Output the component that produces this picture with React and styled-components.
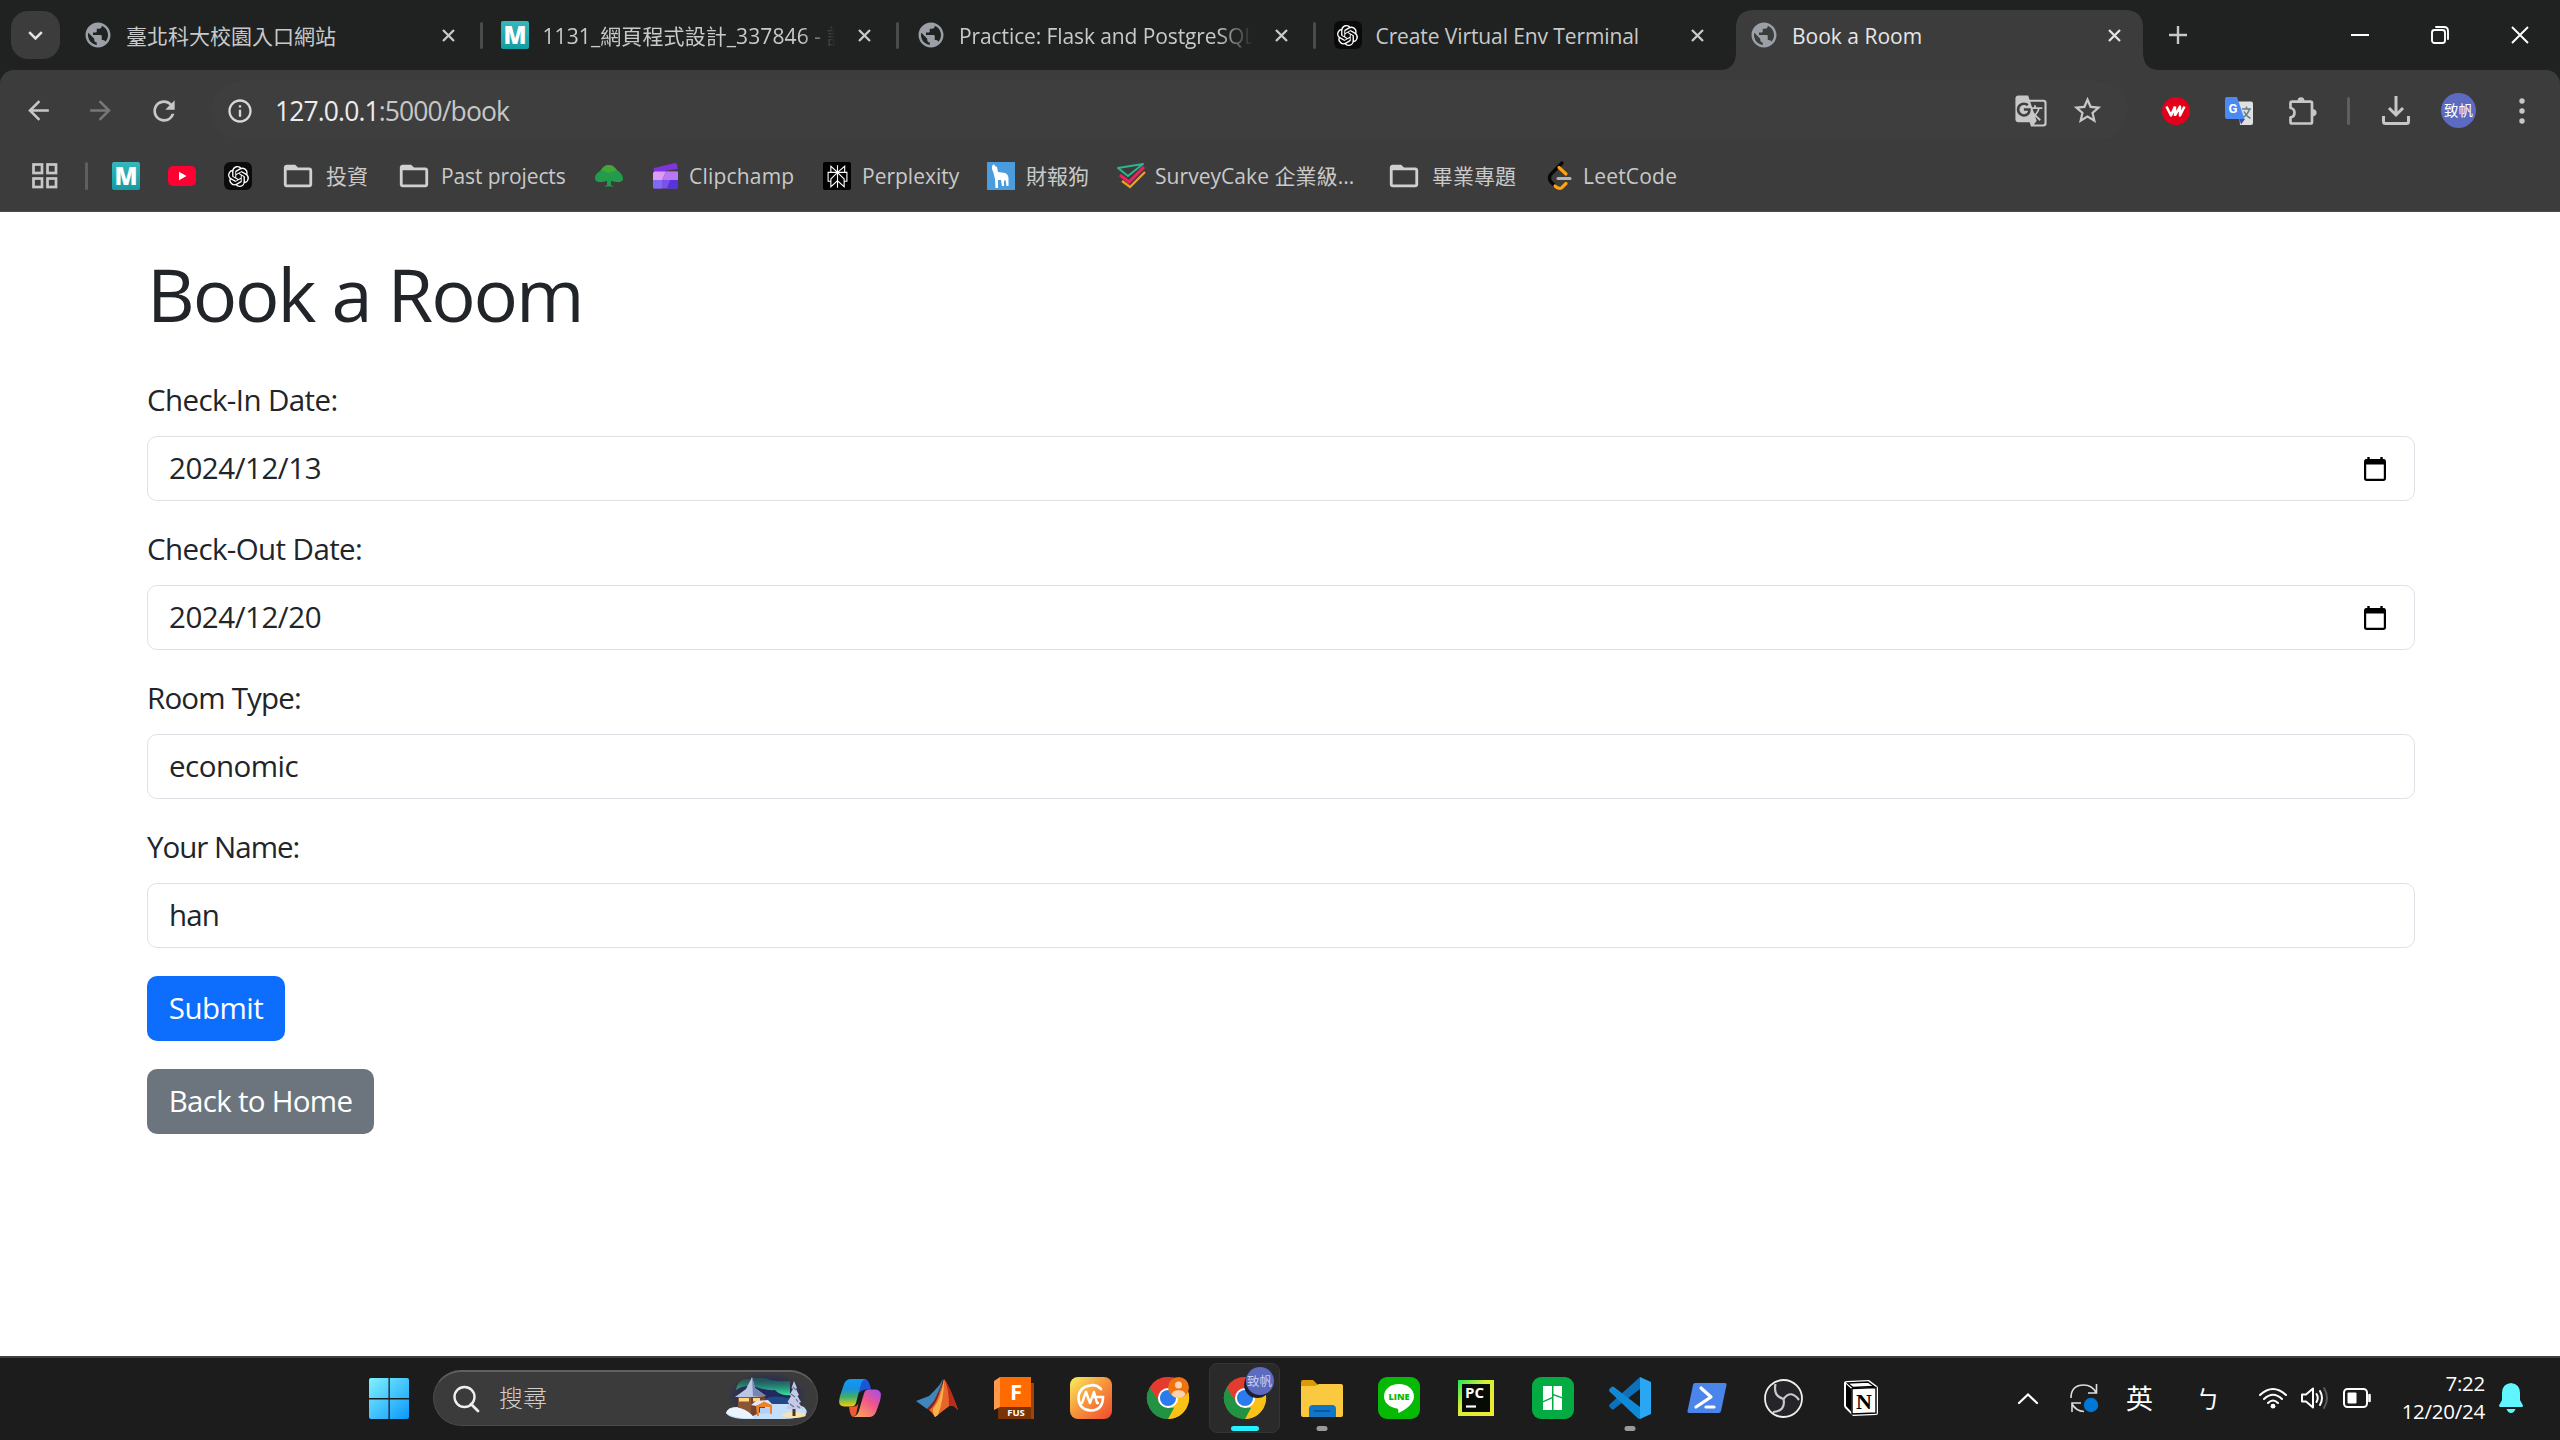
import React from "react";
import styled, { createGlobalStyle, css } from "styled-components";
import {
  MdPublic,
  MdArrowBack,
  MdArrowForward,
  MdRefresh,
  MdInfoOutline,
  MdGTranslate,
  MdStarBorder,
  MdFolderOpen,
} from "react-icons/md";
import { SiOpenai, SiPerplexity } from "react-icons/si";

const font = `"Open Sans", "Noto Sans CJK TC", sans-serif`;

const GlobalStyle = createGlobalStyle`
  * { box-sizing: border-box; }
  body { margin: 0; background: #fff; overflow: hidden; font-family: ${font}; }
  svg { display: block; flex: none; overflow: visible; }
`;

const Screen = styled.div`
  width: 2560px;
  height: 1440px;
  display: flex;
  flex-direction: column;
`;

/* ---------- tab strip ---------- */

const TabStrip = styled.div`
  height: 70px;
  background: #1f2221;
  display: flex;
  align-items: center;
  flex: none;
`;

const TabSearch = styled.div`
  width: 49px;
  height: 48px;
  margin: 0 5px 0 11px;
  border-radius: 17px;
  background: #3c3c3c;
  display: flex;
  align-items: center;
  justify-content: center;
  flex: none;
`;

const Tab = styled.div`
  position: relative;
  width: 416.5px;
  height: 70px;
  flex: none;
  display: flex;
  align-items: center;
  padding: 0 26px 0 18px;
  color: ${(p) => (p.$active ? "#e6e6e6" : "#c9c9c9")};
  ${(p) =>
    p.$divider &&
    css`
      &::after {
        content: "";
        position: absolute;
        right: -1px;
        top: 22px;
        width: 3px;
        height: 27px;
        border-radius: 2px;
        background: #4a4c4b;
      }
    `}
`;

const ActiveShape = styled.svg`
  position: absolute;
  left: -12px;
  top: 10px;
`;

const TabIcon = styled.div`
  width: 30px;
  height: 30px;
  margin-right: 13px;
  display: flex;
  align-items: center;
  justify-content: center;
  position: relative;
`;

const TabTitle = styled.div`
  position: relative;
  flex: 1;
  margin-right: 22px;
  padding-top: 2px;
  overflow: hidden;
  white-space: nowrap;
  font-size: 21px;
  line-height: 34px;
  letter-spacing: ${(p) => p.$ls || 0}px;
  ${(p) =>
    p.$fade &&
    css`
      mask-image: linear-gradient(to right, #000 88%, transparent 100%);
    `}
`;

const TabClose = styled.div`
  position: relative;
  width: 14px;
  display: flex;
`;

const NewTab = styled.div`
  width: 60px;
  display: flex;
  justify-content: center;
`;

const WindowButtons = styled.div`
  margin-left: auto;
  display: flex;
`;

const WindowButton = styled.div`
  width: 80px;
  display: flex;
  align-items: center;
  justify-content: center;
`;

/* ---------- toolbar ---------- */

const ToolbarWrap = styled.div`
  height: 142px;
  flex: none;
  background: #1f2221;
`;

const Toolbar = styled.div`
  height: 142px;
  background: #3c3c3c;
  border-radius: 14px 14px 0 0;
  border-bottom: 1px solid #4b4b4b;
`;

const NavRow = styled.div`
  height: 81px;
  display: flex;
  align-items: center;
  padding: 0 6px 0 7px;
`;

const Slot = styled.div`
  width: ${(p) => p.$w}px;
  display: flex;
  align-items: center;
  justify-content: center;
  color: ${(p) => p.$color || "#c7c7c7"};
  flex: none;
`;

const Omnibox = styled.div`
  width: 1917px;
  height: 59px;
  margin-left: 15px;
  border-radius: 30px;
  background: #3e3e3e;
  display: flex;
  align-items: center;
  padding: 0 13px 0 5px;
  flex: none;
`;

const Url = styled.div`
  flex: 1;
  margin-left: 11px;
  font-size: 26.5px;
  line-height: 40px;
  letter-spacing: -0.9px;
  color: #c7c7c7;
  span {
    color: #ececec;
  }
`;

const VBar = styled.div`
  width: 3px;
  height: 28px;
  border-radius: 2px;
  background: #5f5f5f;
`;

const Avatar = styled.div`
  width: 35px;
  height: 35px;
  border-radius: 50%;
  background: #5c6bc0;
  color: #fff;
  font-family: "Noto Sans CJK TC", sans-serif;
  font-size: 14.5px;
  line-height: 34px;
  text-align: center;
  white-space: nowrap;
`;

const BookmarkRow = styled.div`
  height: 50px;
  display: flex;
  align-items: center;
`;

const Bookmark = styled.div`
  width: ${(p) => p.$w}px;
  flex: none;
  display: flex;
  align-items: center;
  gap: ${(p) => p.$gap || 10}px;
  color: #c9c9c9;
  font-size: 21px;
  line-height: 34px;
  white-space: nowrap;
  letter-spacing: ${(p) => p.$ls || 0}px;
`;

const BookmarkIcon = styled.div`
  width: 28px;
  height: 28px;
  display: flex;
  align-items: center;
  justify-content: center;
  flex: none;
`;

const BlackTile = styled.div`
  width: 28px;
  height: 28px;
  border-radius: ${(p) => p.$r}px;
  background: ${(p) => p.$bg || "#000"};
  color: #fff;
  display: flex;
  align-items: center;
  justify-content: center;
`;

/* ---------- page ---------- */

const Page = styled.main`
  flex: 1;
  background: #fff;
  color: #212529;
  padding: 40px 145px 0 147px;
`;

const Heading = styled.h1`
  margin: 0 0 43px;
  font-size: 74px;
  line-height: 84px;
  font-weight: 400;
  letter-spacing: -2.1px;
`;

const Field = styled.div`
  margin-bottom: 27px;
`;

const Label = styled.div`
  font-size: 29.5px;
  line-height: 42px;
  margin-bottom: 15px;
  letter-spacing: ${(p) => p.$ls || 0}px;
`;

const Control = styled.div`
  height: 65px;
  border: 1px solid #dee2e6;
  border-radius: 10px;
  padding: 0 28px 0 21px;
  display: flex;
  align-items: center;
  justify-content: space-between;
  font-size: 29.5px;
  line-height: 42px;
  letter-spacing: ${(p) => p.$ls || 0}px;
`;

const ControlText = styled.span`
  padding-bottom: 2px;
`;

const Buttons = styled.div`
  display: flex;
  flex-direction: column;
  align-items: flex-start;
  gap: 28px;
  padding-top: 1px;
`;

const Button = styled.div`
  width: ${(p) => p.$w}px;
  height: 65px;
  border-radius: 10px;
  background: ${(p) => p.$bg};
  color: #fff;
  font-size: 29.5px;
  line-height: 64px;
  text-align: center;
  white-space: nowrap;
  letter-spacing: ${(p) => p.$ls || 0}px;
`;

/* ---------- taskbar ---------- */

const Taskbar = styled.div`
  height: 84px;
  flex: none;
  background: #1c1c1c;
  border-top: 2px solid #404040;
  display: flex;
  align-items: center;
  padding: 0 0 2px 369px;
`;

const SearchBox = styled.div`
  width: 385px;
  height: 56px;
  margin: 0 3px 0 24px;
  border-radius: 28px;
  background: #3b3b3b;
  border: 1px solid #4a4a4a;
  border-top: 2px solid #606060;
  display: flex;
  align-items: center;
  padding: 0 10px 0 19px;
  color: #cfcfcf;
  font-family: "Noto Sans CJK TC", sans-serif;
  font-weight: 300;
  font-size: 24px;
  line-height: 34px;
`;

const SearchText = styled.div`
  flex: 1;
  margin-left: 20px;
  padding-bottom: 3px;
`;

const AppSlot = styled.div`
  position: relative;
  width: 77px;
  height: 70px;
  display: flex;
  align-items: center;
  justify-content: center;
  flex: none;
`;

const ActiveTile = styled.div`
  position: absolute;
  inset: 0 3px;
  border-radius: 8px;
  background: #2a2a2a;
  border: 1px solid #353535;
`;

const Indicator = styled.div`
  position: absolute;
  bottom: 2px;
  left: 50%;
  transform: translateX(-50%);
  width: ${(p) => (p.$wide ? 28 : 11)}px;
  height: 5px;
  border-radius: 3px;
  background: ${(p) => (p.$wide ? "#25f0ff" : "#9a9a9a")};
`;

const AppArt = styled.div`
  position: relative;
`;

const AppBadge = styled.div`
  position: absolute;
  left: 22px;
  top: -10px;
  width: 28px;
  height: 28px;
  border-radius: 50%;
  background: #5c6bc0;
  color: #c9cff0;
  font-family: "Noto Sans CJK TC", sans-serif;
  font-size: 12.5px;
  line-height: 27px;
  text-align: center;
  white-space: nowrap;
`;

const Tray = styled.div`
  margin-left: auto;
  padding-right: 37px;
  display: flex;
  align-items: center;
  color: #fff;
`;

const Ime = styled.div`
  width: ${(p) => p.$w}px;
  font-family: "Noto Sans CJK TC", sans-serif;
  font-size: ${(p) => p.$size}px;
  line-height: 36px;
  flex: none;
`;

const Clock = styled.div`
  width: 114px;
  margin-right: 14px;
  padding-bottom: 2px;
  text-align: right;
  font-size: 20.5px;
  line-height: 28px;
  letter-spacing: -0.25px;
  white-space: nowrap;
`;

/* ---------- drawings ---------- */

const Cross = ({ s = 13, w = 2.3, c = "#d0d0d0" }) => (
  <svg width={s} height={s} viewBox={`0 0 ${s} ${s}`}>
    <path d={`M1 1L${s - 1} ${s - 1}M${s - 1} 1L1 ${s - 1}`} stroke={c} strokeWidth={w} />
  </svg>
);

const Svg = ({ w, h = w, vb, children }) => (
  <svg width={w} height={h} viewBox={vb || `0 0 ${w} ${h}`} fill="none">
    {children}
  </svg>
);

const MLogo = () => (
  <Svg w={28}>
    <defs>
      <linearGradient id="ml" x1="0" y1="0" x2="0" y2="1">
        <stop offset="0" stopColor="#35b7bd" />
        <stop offset="1" stopColor="#129da3" />
      </linearGradient>
    </defs>
    <rect width="28" height="28" rx="2" fill="url(#ml)" />
    <text x="14" y="22.5" textAnchor="middle" fill="#fff" fontFamily="Open Sans" fontWeight="800" fontSize="24" textLength="23" lengthAdjust="spacingAndGlyphs">M</text>
  </Svg>
);

const GptLogo = ({ bg }) => (
  <BlackTile $r={6} $bg={bg || "#0b0b0b"}>
    <SiOpenai size={21} />
  </BlackTile>
);

const YouTube = () => (
  <Svg w={28} h={20}>
    <rect width="28" height="20" rx="5" fill="#ff0033" />
    <path d="M11 5.8L18.5 10L11 14.2Z" fill="#fff" />
  </Svg>
);

const Tree = () => (
  <Svg w={28} h={22}>
    <path d="M14 0C18 0 20 3 22 5C25 7 28 10 28 13.5C28 17 24 17.5 21 17L16 16V20L19 21.6H9L12 20V16L7 17C3 17.5 0 16.5 0 13C0 9 4 7 6 5C8 2 10 0 14 0Z" fill="#239b4c" />
    <path d="M14 0C18 0 20 3 22 5L14 8L6 5C8 2 10 0 14 0Z" fill="#46a537" />
  </Svg>
);

const Clipchamp = () => (
  <Svg w={26} h={26}>
    <path d="M1 5L22 0Q24 0 24.3 3L24.5 6L2 9.5Q0 9 1 5Z" fill="#7f35db" />
    <rect x="0" y="8.5" width="25" height="17" rx="1.5" fill="#7d50ea" />
    <path d="M1.5 8.5H13L9 17H0V10Z" fill="#dc9cf7" />
    <path d="M13 8.5H25V17H9Z" fill="#b877f3" />
    <path d="M0 17H9V25.5H1.5Q0 25.5 0 24Z" fill="#7f6bf3" />
    <path d="M17 17H25V24Q25 25.5 23.500 25.500H14Z" fill="#5533df" />
  </Svg>
);

const HorseDog = () => (
  <Svg w={28}>
    <rect width="28" height="28" fill="#4b9cdc" />
    <path d="M5 4L7 2L8 4L10 5L11 10L18 11Q21 12 21.5 16V24H19.500L18.500 18L17 19V24H15L14 18H11V26H8.500L8 17L6.500 11L5 7Z" fill="#fff" />
  </Svg>
);

const SurveyCake = () => (
  <Svg w={28} h={26}>
    <path d="M1 5L26 1L11 13Z" stroke="#2db68c" strokeWidth="2" strokeLinejoin="round" />
    <path d="M3 12L12 19L27 4" stroke="#e9245f" strokeWidth="3" />
    <path d="M5 18L13 24L28 9" stroke="#f59a1b" strokeWidth="2.400" />
  </Svg>
);

const LeetCode = () => (
  <Svg w={24} h={28}>
    <path d="M14 1L3 12Q0 16 3 20L8 25" stroke="#070707" strokeWidth="3.400" strokeLinecap="round" />
    <path d="M11 5.500L18 12M7 24Q11 28 14 25.500L18 21.500" stroke="#ffa116" strokeWidth="3.200" strokeLinecap="round" />
    <path d="M10 16.500H22" stroke="#b5b5b5" strokeWidth="3" strokeLinecap="round" />
  </Svg>
);

const Grid4 = () => (
  <Svg w={26}>
    {[[1.5, 1.5], [15.5, 1.5], [1.5, 15.5], [15.5, 15.5]].map(([x, y]) => (
      <rect key={`${x}-${y}`} x={x} y={y} width="8.500" height="8.500" stroke="#c7c7c7" strokeWidth="2.700" />
    ))}
  </Svg>
);

const VwBadge = () => (
  <Svg w={28}>
    <circle cx="14" cy="14" r="14" fill="#e2001a" />
    <path d="M4.500 9.500L9 18.500L13 9.500M13 19V9.500M13 18.500L18 9.500V18.500L22.500 9.500" stroke="#fff" strokeWidth="2.500" strokeLinejoin="round" />
  </Svg>
);

const GTranslateColor = () => (
  <Svg w={28}>
    <path d="M13 4.500H26Q28 4.500 28 6.500V26Q28 28 26 28H15Z" fill="#e0e0e0" />
    <path d="M14.500 22H20L16 27.500Z" fill="#3949ab" />
    <path d="M2 0H12L19.500 22H2Q0 22 0 20V2Q0 0 2 0Z" fill="#4a8af4" />
    <text x="3.500" y="15.500" fill="#fff" fontFamily="Roboto" fontWeight="700" fontSize="13">G</text>
    <path d="M17 12H26M21.500 9.500V12M24.500 12Q22.500 18 18.500 20M19 14.500Q21 19 25.500 21.500" stroke="#607d8b" strokeWidth="1.500" />
  </Svg>
);

const Puzzle = () => (
  <Svg w={28} h={28}>
    <path
      d="M1.500 11V6.200Q1.500 4.700 3 4.700H21.500Q23 4.700 23 6.200V25Q23 26.500 21.500 26.500H3Q1.500 26.500 1.500 25V20.400C6.800 19.600 6.800 11.800 1.500 11Z"
      stroke="#c7c7c7"
      strokeWidth="2.700"
      strokeLinejoin="round"
    />
    <path d="M8.500 4.500Q8.500 .3 12 .3Q15.500 .3 15.500 4.500ZM23.500 12Q27.600 12.400 27.600 15.700Q27.600 19 23.500 19.400Z" fill="#c7c7c7" />
    <path d="M0 12.700V18.700" stroke="#3c3c3c" strokeWidth="4" />
  </Svg>
);

const Download = () => (
  <Svg w={28} h={29}>
    <path d="M14 0V18M7 12L14 19L21 12" stroke="#c7c7c7" strokeWidth="3" />
    <path d="M1.500 20V25.500Q1.500 27.500 3.500 27.500H24.500Q26.500 27.500 26.500 25.500V20" stroke="#c7c7c7" strokeWidth="3" />
  </Svg>
);

const Calendar = () => (
  <Svg w={22} h={24}>
    <path d="M4.500 0V4M17.500 0V4" stroke="#000" strokeWidth="2.400" />
    <rect x="1.100" y="3.200" width="19.800" height="19.600" rx="1.600" stroke="#000" strokeWidth="2.200" />
    <rect x="1" y="2.500" width="20" height="5" fill="#000" />
  </Svg>
);

const WinLogo = () => (
  <Svg w={40} h={41}>
    <defs>
      <linearGradient id="wn" x1="0" y1="0" x2="40" y2="41" gradientUnits="userSpaceOnUse">
        <stop offset="0" stopColor="#80f2ff" />
        <stop offset="1" stopColor="#0a97fb" />
      </linearGradient>
    </defs>
    <path d="M2 0H19.500V20H0V2Q0 0 2 0ZM20.800 0H38Q40 0 40 2V20H20.800ZM0 21.500H19.500V41H2Q0 41 0 39ZM20.800 21.500H40V39Q40 41 38 41H20.800Z" fill="url(#wn)" />
  </Svg>
);

const Winter = () => (
  <Svg w={81} h={43}>
    <defs>
      <radialGradient id="nt" cx=".5" cy=".5" r=".5">
        <stop offset=".5" stopColor="#20285e" />
        <stop offset="1" stopColor="#20285e" stopOpacity="0" />
      </radialGradient>
      <linearGradient id="au" x1="0" y1="0" x2="0" y2="1">
        <stop offset="0" stopColor="#1a7f66" stopOpacity=".35" />
        <stop offset="1" stopColor="#35e69a" />
      </linearGradient>
    </defs>
    <ellipse cx="41" cy="19" rx="40" ry="24" fill="url(#nt)" />
    <path d="M10 13Q11 5 18 2H24V9Q15 9 10 13ZM27 1H40Q46 5 64 4V18Q54 19 49 13Q40 14 27 9Z" fill="url(#au)" />
    <path d="M34 24Q46 16 66 22V29H34Z" fill="#1f4a86" />
    <path d="M0 36Q2 29 13 30L30 33L44 27H70L78 30Q82 34 80 37Q72 42 58 42H22Q4 42 0 36Z" fill="#c4dff9" />
    <path d="M12 19L39 19V33L25 40L12 31Z" fill="#74422f" />
    <path d="M12 19L25 19V39L12 31Z" fill="#8c5535" />
    <path d="M13 21H23V24.500H13ZM27 21H34V24.500H27Z" fill="#ffd67c" />
    <path d="M26 0L29 11L40 19L25 20L9 20L20 12Z" fill="#b9c6e4" />
    <path d="M26 0L29 11L40 19L27 19Z" fill="#7685b6" />
    <path d="M25 28L30 24L42 23L47 28L43 29L38 26L30 29Z" fill="#dfe8fa" />
    <path d="M30 29L38 24.500L46 28V37H44V30H33V39H31Z" fill="#ee812c" />
    <path d="M34 31H44V36L34 37Z" fill="#b3cff2" />
    <path d="M0 36Q3 29 14 31Q24 34 28 41Q8 42 0 36Z" fill="#eaf4ff" />
    <ellipse cx="68" cy="38" rx="12" ry="3" fill="#f7e3af" />
    <path d="M68 27V39" stroke="#4e3326" strokeWidth="3" />
    <path d="M68 4L71 11L70 12L73 18L71.500 19L75 25L73 26L77 32H60L63 26L61.500 25L65 19L63.500 18L67 12L65.500 11Z" fill="#c4cbe4" />
    <path d="M67 10L70 13M65 17L69 20M70 22L72 25M64 27L68 30M71 29L74 31" stroke="#6d759f" strokeWidth="1.300" />
  </Svg>
);

const Copilot = () => (
  <Svg w={42} h={38}>
    <defs>
      <linearGradient id="ca" x1="0" y1="0" x2="0" y2="1">
        <stop offset="0" stopColor="#0e9bf5" />
        <stop offset=".35" stopColor="#1a8fe0" />
        <stop offset=".65" stopColor="#3fae6a" />
        <stop offset="1" stopColor="#f8cc0a" />
      </linearGradient>
      <linearGradient id="cb" x1="1" y1="0" x2="0.300" y2="1">
        <stop offset="0" stopColor="#a24df0" />
        <stop offset=".5" stopColor="#f0568c" />
        <stop offset="1" stopColor="#ff9b5c" />
      </linearGradient>
    </defs>
    <path d="M20 0H26Q30 0 32 10.500H27Q22 11 20 14Z" fill="#1b55d8" />
    <path d="M12 0H27Q23 1 22 5L17 24Q16 27.500 12 27.500H5Q-2 27.500 1 17L5 5Q7 0 12 0Z" fill="url(#ca)" />
    <path d="M10 27.500H15Q18 27.500 19.500 24L17 36L14 38Q11 37 10 27.500Z" fill="#ee5a30" />
    <path d="M30 38H14Q18 37 19.500 33L25 14.500Q26 10.500 30 10.500H37Q44 11 41 22L37 33Q35 38 30 38Z" fill="url(#cb)" />
  </Svg>
);

const Matlab = () => (
  <Svg w={42} h={38}>
    <path d="M0 22L13 17L20 10Q24 6 27 0L22 22L11 30Z" fill="#3f86bd" />
    <path d="M11 30L18 22Q24 10 27 0Q20 24 19 38Q15 31 11 30Z" fill="#8c1d14" />
    <path d="M28 0Q33 6 42 31Q36 24 32 28L19 38Q16 33 13 31Q21 26 28 0Z" fill="#e8652a" />
    <path d="M28 0Q28 20 22 36L19 38Q16 33 17 30Q25 20 28 0Z" fill="#f7b24a" />
    <path d="M29 1Q34 8 42 31Q37 25 33 27Q33 12 29 1Z" fill="#b92b1c" />
  </Svg>
);

const Fusion = () => (
  <Svg w={40} h={42}>
    <path d="M4 30H40V42H4Z" fill="#7a3305" />
    <path d="M37 6H40V42H37Z" fill="#a04407" />
    <path d="M6 0H37V30H6Z" fill="#ff6b00" />
    <path d="M0 4L6 0V30L0 33Z" fill="#ff9a4d" />
    <text x="22" y="22.500" textAnchor="middle" fill="#fff" fontFamily="Open Sans" fontWeight="700" fontSize="22">F</text>
    <text x="22" y="38.500" textAnchor="middle" fill="#fff" fontFamily="Open Sans" fontWeight="700" fontSize="9.500">FUS</text>
  </Svg>
);

const PulseApp = () => (
  <Svg w={42}>
    <defs>
      <linearGradient id="gm" x1="0" y1="0" x2="1" y2="1">
        <stop offset="0" stopColor="#f8f060" />
        <stop offset=".45" stopColor="#f79a3c" />
        <stop offset="1" stopColor="#ef4a2e" />
      </linearGradient>
    </defs>
    <rect width="42" height="42" rx="8" fill="url(#gm)" />
    <path d="M31 12Q26 7 20 8.500Q9 10 8.500 21Q9 33 21 33.500Q33 33 33 20H24" stroke="#fff" strokeWidth="2.600" strokeLinecap="round" />
    <path d="M9 26H12L16 15L20 26L24 15L27 26H29" stroke="#fff" strokeWidth="2.400" strokeLinejoin="round" />
  </Svg>
);

const Chrome = ({ children }) => (
  <Svg w={42} vb="0 0 48 48">
    <path d="M24 24L3.200 12A24 24 0 0 1 44.800 12Z" fill="#ea4335" />
    <path d="M24 24L44.800 12A24 24 0 0 1 24 48Z" fill="#fbbc04" />
    <path d="M24 24L24 48A24 24 0 0 1 3.200 12Z" fill="#34a853" />
    <path d="M24 13H45.300A24 24 0 0 1 24 48L33.500 29.500Z" fill="#fbc116" />
    <path d="M3.200 12L14.500 29.500Q18 35 24 35H31L24 48A24 24 0 0 1 3.200 12Z" fill="#229342" />
    <path d="M3.200 12A24 24 0 0 1 45.300 13H24L14.500 29.500Z" fill="#e33b2e" />
    <circle cx="24" cy="24" r="11.500" fill="#fff" />
    <circle cx="24" cy="24" r="9.200" fill="#2a7bee" />
    {children}
  </Svg>
);

const PersonBadge = () => (
  <g>
    <circle cx="36" cy="12" r="12" fill="#ee7310" />
    <circle cx="36" cy="9" r="4" fill="#fbd3b0" />
    <path d="M28 20Q29 15 36 15Q43 15 44 20Q41 24 36 24Q31 24 28 20Z" fill="#fbd3b0" />
  </g>
);

const BadgeShadow = () => <circle cx="38" cy="9" r="15" fill="#1d2030" />;

const Explorer = () => (
  <Svg w={42} h={37}>
    <path d="M0 2Q0 0 2 0H12L17 5V12H0Z" fill="#dc9b06" />
    <path d="M0 6H14L18 4H40Q42 4 42 6V35Q42 37 40 37H2Q0 37 0 35Z" fill="#fbc93f" />
    <path d="M8 37V29Q8 25 12 25H31Q35 25 35 29V37Z" fill="#1175c8" />
    <path d="M13 31H29" stroke="#07518f" strokeWidth="1.500" />
  </Svg>
);

const Line = () => (
  <Svg w={42}>
    <rect width="42" height="42" rx="9" fill="#05b905" />
    <path d="M21 7C12 7 6 12.500 6 19.500C6 26 12 30.500 19 31.500C21 32 20 34 20.500 36C27 33 36 27 36 19.500C36 12.500 30 7 21 7Z" fill="#fff" />
    <text x="21" y="23" textAnchor="middle" fill="#05b905" fontFamily="Open Sans" fontWeight="800" fontSize="9.500" textLength="21" lengthAdjust="spacingAndGlyphs">LINE</text>
  </Svg>
);

const PyCharm = () => (
  <Svg w={36}>
    <defs>
      <linearGradient id="pc" x1="0" y1="0" x2="1" y2="1">
        <stop offset="0" stopColor="#21e65a" />
        <stop offset=".4" stopColor="#d5ee35" />
        <stop offset="1" stopColor="#f2ea30" />
      </linearGradient>
    </defs>
    <rect width="36" height="36" fill="url(#pc)" />
    <rect x="4" y="4" width="28" height="28" fill="#060b06" />
    <text x="7" y="18" fill="#fff" fontFamily="Open Sans" fontWeight="700" fontSize="14" textLength="19" lengthAdjust="spacingAndGlyphs">PC</text>
    <path d="M8 26.500H18" stroke="#fff" strokeWidth="2.200" />
  </Svg>
);

const GreenApp = () => (
  <Svg w={42}>
    <rect width="42" height="42" rx="9" fill="#04ab42" />
    <path d="M11 9H20V20L11 24ZM21.500 9H30V20L21.500 17ZM11 25.500L20 21.500V33H11ZM21.500 18.500L30 21.500V33H21.500Z" fill="#fff" />
  </Svg>
);

const VsCode = () => (
  <Svg w={42}>
    <path d="M31 0L42 5V37L31 42Z" fill="#2aa7f2" />
    <path d="M31 0V12L5 32Q4 33 2.500 32L.5 30Q-.5 29 .5 27.500Z" fill="#0e70b8" />
    <path d="M31 42V30L5 10Q4 9 2.500 10L.5 12Q-.5 13 .5 14.500L29 41.500Z" fill="#1089d6" />
  </Svg>
);

const PowerShell = () => (
  <Svg w={40} h={30}>
    <path d="M8 0H38Q40 0 39.500 2L34 28Q33.500 30 32 30H2Q0 30 .5 28L6 2Q6.500 0 8 0Z" fill="#4b84ea" />
    <path d="M14 5L24 14L9 24M19 24H27" stroke="#fff" strokeWidth="3.200" strokeLinecap="round" strokeLinejoin="round" />
  </Svg>
);

const Obs = () => (
  <Svg w={39}>
    <circle cx="19.500" cy="19.500" r="18.500" fill="#252428" stroke="#efefef" strokeWidth="1.800" />
    <g stroke="#c9c9cb" strokeWidth="2.200">
      <path d="M19.500 20Q9 17 11.500 5" />
      <path d="M19.500 20Q27 10 35 21" />
      <path d="M19.500 20Q22 32 9 33" />
    </g>
  </Svg>
);

const Notion = () => (
  <Svg w={34} h={36}>
    <path d="M3 1L25 0L33 6Q34 7 34 8V33Q34 35 32 35L9 36L1 28Q0 27 0 25V3Q0 1 3 1Z" fill="#fff" />
    <path d="M3.500 3L24 2L30 6.500L9 7.500Z" fill="#fff" stroke="#000" strokeWidth="1.300" />
    <path d="M2 4L7.500 9V32L2 26Z" fill="#000" />
    <path d="M8 8.500L32 7.500V33L8 34Z" fill="#fff" stroke="#000" strokeWidth="1.400" />
    <text x="20" y="28.500" textAnchor="middle" fill="#000" fontFamily="Liberation Serif" fontWeight="700" fontSize="22">N</text>
  </Svg>
);

const Magnifier = () => (
  <Svg w={26}>
    <circle cx="11.500" cy="11" r="10" stroke="#efefef" strokeWidth="2.400" />
    <path d="M18 18L25 25" stroke="#efefef" strokeWidth="2.800" strokeLinecap="round" />
  </Svg>
);

const Sync = () => (
  <Svg w={28}>
    <path d="M1 14Q1 1 14 1Q22 1 26.500 9M26.500 0V9H18M2 28V19H11M2 20Q6 27 14 27.500" stroke="#dedede" strokeWidth="1.600" />
    <circle cx="21" cy="21" r="7.200" fill="#0078d7" />
  </Svg>
);

const Wifi = () => (
  <Svg w={28} h={21}>
    <path d="M1 7Q14 -5 27 7M5 11Q14 2.500 23 11M9 15Q14 10 19 15" stroke="#fff" strokeWidth="2.100" strokeLinecap="round" />
    <circle cx="14" cy="18.200" r="2.400" fill="#fff" />
  </Svg>
);

const Speaker = () => (
  <Svg w={28} h={22}>
    <path d="M1 7.500H5L12 1.500V20.500L5 14.500H1Z" stroke="#fff" strokeWidth="2" strokeLinejoin="round" />
    <path d="M15.500 7Q18 11 15.500 15M19 4Q23 11 19 18" stroke="#fff" strokeWidth="2" strokeLinecap="round" />
    <path d="M23 1Q29 11 23 21" stroke="#5a5a5a" strokeWidth="2" strokeLinecap="round" />
  </Svg>
);

const Battery = () => (
  <Svg w={28} h={20}>
    <rect x="1" y="1" width="23" height="18" rx="3.500" stroke="#fff" strokeWidth="2" />
    <rect x="4.500" y="4.500" width="9" height="11" rx="1" fill="#fff" />
    <path d="M26.500 7V13" stroke="#fff" strokeWidth="2.600" strokeLinecap="round" />
  </Svg>
);

const Bell = () => (
  <Svg w={24} h={30}>
    <path d="M12 0Q21 1 21 10V17L24 22.500Q24 24 22.500 24H1.500Q0 24 0 22.500L3 17V10Q3 1 12 0Z" fill="#60f5ff" />
    <path d="M7.500 26H16.500Q15 30 12 30Q9 30 7.500 26Z" fill="#60f5ff" />
  </Svg>
);

const Globe = () => <MdPublic size={30} color="#9aa0a6" />;

const tabs = [
  { title: "臺北科大校園入口網站", icon: <Globe />, divider: true },
  { title: "1131_網頁程式設計_337846 - 課", icon: <MLogo />, divider: true, fade: true, ls: 0.1 },
  { title: "Practice: Flask and PostgreSQL", icon: <Globe />, divider: true, fade: true, ls: -0.1 },
  { title: "Create Virtual Env Terminal", icon: <GptLogo bg="#0a0a0a" />, ls: -0.1 },
  { title: "Book a Room", icon: <Globe />, active: true, ls: 0 },
];

const Folder = () => <MdFolderOpen size={34} color="#d0d0d0" />;

const bookmarks = [
  { w: 56, icon: <MLogo /> },
  { w: 56, icon: <YouTube /> },
  { w: 60, icon: <GptLogo /> },
  { w: 116, icon: <Folder />, text: "投資", gap: 14 },
  { w: 195, icon: <Folder />, text: "Past projects", gap: 13, ls: -0.1 },
  { w: 57, icon: <Tree /> },
  { w: 171, icon: <Clipchamp />, text: "Clipchamp", gap: 9, ls: 0.2 },
  { w: 164, icon: <BlackTile $r={2}><SiPerplexity size={23} /></BlackTile>, text: "Perplexity", gap: 11 },
  { w: 130, icon: <HorseDog />, text: "財報狗", gap: 11 },
  { w: 273, icon: <SurveyCake />, text: "SurveyCake 企業級...", gap: 10, ls: 0.05 },
  { w: 156, icon: <Folder />, text: "畢業專題", gap: 14 },
  { w: 140, icon: <LeetCode />, text: "LeetCode", gap: 9, ls: 0.2 },
];

const apps = [
  { id: "copilot", art: <Copilot /> },
  { id: "matlab", art: <Matlab /> },
  { id: "fusion", art: <Fusion /> },
  { id: "pulse", art: <PulseApp /> },
  { id: "chrome-1", art: <Chrome><PersonBadge /></Chrome> },
  { id: "chrome-2", art: <Chrome><BadgeShadow /></Chrome>, active: true },
  { id: "explorer", art: <Explorer />, running: true },
  { id: "line", art: <Line /> },
  { id: "pycharm", art: <PyCharm /> },
  { id: "green", art: <GreenApp /> },
  { id: "vscode", art: <VsCode />, running: true },
  { id: "powershell", art: <PowerShell /> },
  { id: "obs", art: <Obs /> },
  { id: "notion", art: <Notion /> },
];

const fields = [
  { label: "Check-In Date:", value: "2024/12/13", date: true, ls: -0.6, vls: -0.45 },
  { label: "Check-Out Date:", value: "2024/12/20", date: true, ls: -0.6, vls: -0.45 },
  { label: "Room Type:", value: "economic", ls: -0.8, vls: -0.5 },
  { label: "Your Name:", value: "han", ls: -1, vls: -0.9 },
];

export default function App() {
  return (
    <Screen>
      <GlobalStyle />
      <TabStrip>
        <TabSearch>
          <Svg w={15} h={9}>
            <path d="M1.200 1.200L7.500 7.500L13.800 1.200" stroke="#e3e3e3" strokeWidth="2.600" />
          </Svg>
        </TabSearch>
        {tabs.map((t) => (
          <Tab key={t.title} $active={t.active} $divider={t.divider}>
            {t.active && (
              <ActiveShape width="442" height="60" viewBox="0 0 442 60">
                <path d="M0 60Q17 60 17 42V18Q17 0 35 0H406Q424 0 424 18V42Q424 60 441 60Z" fill="#3c3c3c" />
              </ActiveShape>
            )}
            <TabIcon>{t.icon}</TabIcon>
            <TabTitle $fade={t.fade} $ls={t.ls}>{t.title}</TabTitle>
            <TabClose><Cross c={t.active ? "#e3e3e3" : "#c9c9c9"} /></TabClose>
          </Tab>
        ))}
        <NewTab>
          <Svg w={18}>
            <path d="M9 0V18M0 9H18" stroke="#c7c7c7" strokeWidth="2.400" />
          </Svg>
        </NewTab>
        <WindowButtons>
          <WindowButton>
            <Svg w={18} h={2}><rect width="18" height="2" fill="#fff" /></Svg>
          </WindowButton>
          <WindowButton>
            <Svg w={18}>
              <rect x="1" y="4" width="13" height="13" rx="2.500" stroke="#fff" strokeWidth="1.900" />
              <path d="M5 1H13Q17 1 17 5V13" stroke="#fff" strokeWidth="1.900" strokeLinecap="round" />
            </Svg>
          </WindowButton>
          <WindowButton><Cross s={18} w={1.9} c="#fff" /></WindowButton>
        </WindowButtons>
      </TabStrip>

      <ToolbarWrap>
        <Toolbar>
          <NavRow>
            <Slot $w={62}><MdArrowBack size={31} /></Slot>
            <Slot $w={62} $color="#777777"><MdArrowForward size={31} /></Slot>
            <Slot $w={65}><MdRefresh size={32} /></Slot>
            <Omnibox>
              <Slot $w={48} $color="#d8d8d8"><MdInfoOutline size={28} /></Slot>
              <Url><span>127.0.0.1</span>:5000/book</Url>
              <Slot $w={56}><MdGTranslate size={34} /></Slot>
              <Slot $w={56}><MdStarBorder size={33} /></Slot>
            </Omnibox>
            <Slot $w={16} />
            <Slot $w={64}><VwBadge /></Slot>
            <Slot $w={62}><GTranslateColor /></Slot>
            <Slot $w={66}><Puzzle /></Slot>
            <Slot $w={24}><VBar /></Slot>
            <Slot $w={71}><Download /></Slot>
            <Slot $w={55}><Avatar>致帆</Avatar></Slot>
            <Slot $w={71}>
              <Svg w={6} h={26}>
                <circle cx="3" cy="3" r="2.700" fill="#c7c7c7" />
                <circle cx="3" cy="13" r="2.700" fill="#c7c7c7" />
                <circle cx="3" cy="23" r="2.700" fill="#c7c7c7" />
              </Svg>
            </Slot>
          </NavRow>
          <BookmarkRow>
            <Slot $w={18} />
            <Slot $w={54}><Grid4 /></Slot>
            <Slot $w={28}><VBar /></Slot>
            <Slot $w={12} />
            {bookmarks.map((b, i) => (
              <Bookmark key={i} $w={b.w} $gap={b.gap} $ls={b.ls}>
                <BookmarkIcon>{b.icon}</BookmarkIcon>
                {b.text}
              </Bookmark>
            ))}
          </BookmarkRow>
        </Toolbar>
      </ToolbarWrap>

      <Page>
        <Heading>Book a Room</Heading>
        {fields.map((f) => (
          <Field key={f.label}>
            <Label $ls={f.ls}>{f.label}</Label>
            <Control $ls={f.vls}>
              <ControlText>{f.value}</ControlText>
              {f.date && <Calendar />}
            </Control>
          </Field>
        ))}
        <Buttons>
          <Button $bg="#0d6efd" $w={138} $ls={-0.5}>Submit</Button>
          <Button $bg="#6c757d" $w={227} $ls={-0.7}>Back to Home</Button>
        </Buttons>
      </Page>

      <Taskbar>
        <WinLogo />
        <SearchBox>
          <Magnifier />
          <SearchText>搜尋</SearchText>
          <Winter />
        </SearchBox>
        {apps.map((a) => (
          <AppSlot key={a.id}>
            {a.active && <ActiveTile />}
            <AppArt>
              {a.art}
              {a.active && <AppBadge>致帆</AppBadge>}
            </AppArt>
            {(a.active || a.running) && <Indicator $wide={a.active} />}
          </AppSlot>
        ))}
        <Tray>
          <Slot $w={36}>
            <Svg w={20} h={11}><path d="M1 10L10 1.500L19 10" stroke="#fff" strokeWidth="2.200" strokeLinecap="round" /></Svg>
          </Slot>
          <Slot $w={76}><Sync /></Slot>
          <Slot $w={4} />
          <Ime $w={70} $size={27}>英</Ime>
          <Ime $w={63} $size={24}>ㄅ</Ime>
          <Slot $w={28}><Wifi /></Slot>
          <Slot $w={56}><Speaker /></Slot>
          <Slot $w={28}><Battery /></Slot>
          <Clock>
            7:22
            <br />
            12/20/24
          </Clock>
          <Bell />
        </Tray>
      </Taskbar>
    </Screen>
  );
}
